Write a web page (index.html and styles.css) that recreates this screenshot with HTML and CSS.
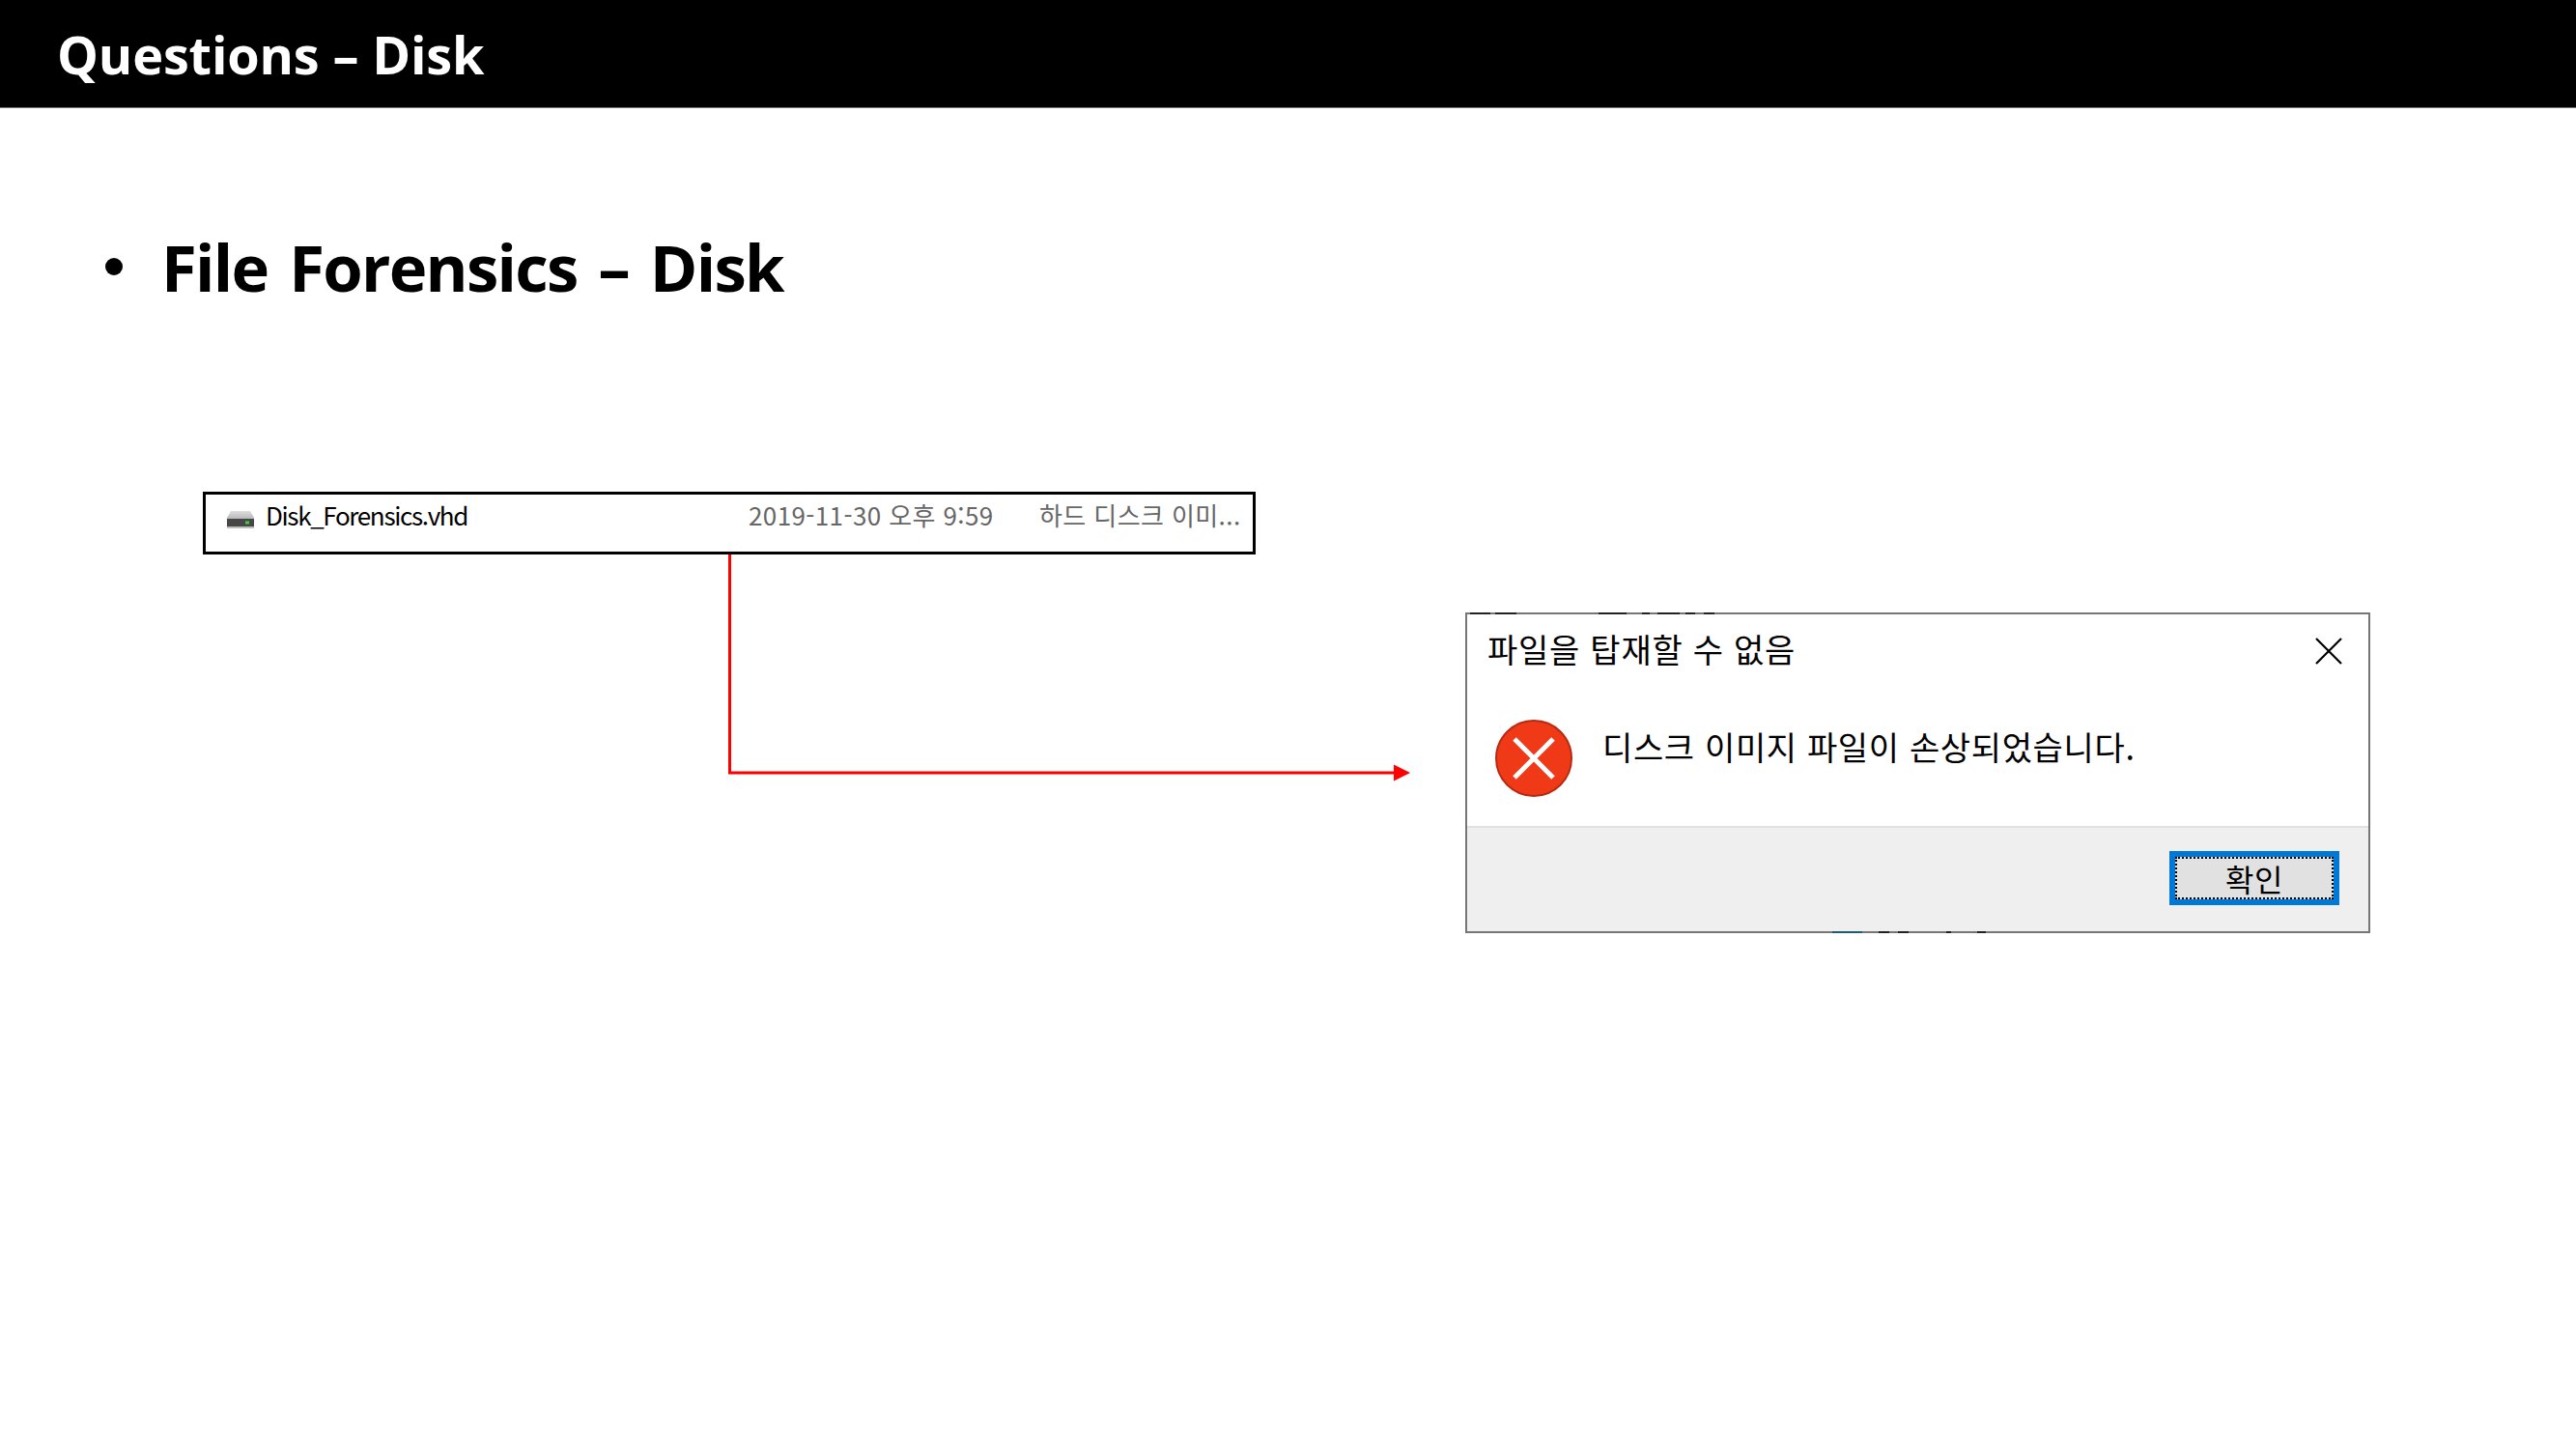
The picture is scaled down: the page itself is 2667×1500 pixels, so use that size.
FILE: index.html
```html
<!DOCTYPE html>
<html lang="ko">
<head>
<meta charset="utf-8">
<title>Questions – Disk</title>
<link rel="stylesheet" href="styles.css">
</head>
<body>
<header class="topbar"><h1 class="topbar-title">Questions – Disk</h1></header>
<main class="slide">
  <ul class="points"><li class="point"><span class="bullet"></span><span>File Forensics – Disk</span></li></ul>
  <section class="diagram">
    <div class="file-row">
      <svg class="drive" viewBox="0 0 28 18" aria-hidden="true">
        <defs><linearGradient id="dt" x1="0" y1="0" x2="0" y2="1"><stop offset="0" stop-color="#dedede"/><stop offset="1" stop-color="#b4b4b4"/></linearGradient></defs>
        <path d="M4 0h20l4 7v2H0V7z" fill="url(#dt)"/>
        <rect x="0" y="8" width="28" height="8" fill="#474747"/>
        <rect x="0" y="16" width="28" height="2" fill="#bdbdbd"/>
        <rect x="19" y="10.5" width="4" height="3" fill="#35d43a"/>
      </svg>
      <span class="file-name">Disk_Forensics.vhd</span>
      <span class="file-date">2019-11-30 오후 9:59</span>
      <span class="file-type">하드 디스크 이미...</span>
    </div>
    <div class="dialog">
      <div class="dialog-head">
        <span class="dialog-title">파일을 탑재할 수 없음</span>
        <svg class="close" viewBox="0 0 28 28" aria-hidden="true"><path d="M1 1l26 26M27 1L1 27" stroke="#000" stroke-width="2.2" fill="none"/></svg>
      </div>
      <div class="dialog-body">
        <svg class="err" viewBox="0 0 80 80" aria-hidden="true">
          <circle cx="40" cy="40" r="39" fill="#f03a17" stroke="#b72a12" stroke-width="2"/>
          <path d="M20 20l40 40M60 20L20 60" stroke="#fff" stroke-width="5" fill="none"/>
        </svg>
        <span class="dialog-msg">디스크 이미지 파일이 손상되었습니다.</span>
      </div>
      <div class="dialog-foot"><button class="ok" type="button"><span class="ok-focus">확인</span></button></div>
    </div>
    <svg class="connector" viewBox="0 0 720 240" aria-hidden="true">
      <path d="M1.5 0V226H690" fill="none" stroke="#f00" stroke-width="3"/>
      <path d="M689 217.5L706 226L689 234.5z" fill="#f00"/>
    </svg>
  </section>
</main>
</body>
</html>
```
FILE: styles.css
```css
* { box-sizing: border-box; }
html, body { margin: 0; padding: 0; background: #fff; }
body { width: 2667px; height: 1500px; overflow: hidden; font-family: "Noto Sans CJK KR", "Noto Sans", sans-serif; color: #000; }
.topbar { height: 112px; background: #000; border-bottom: 1px solid #777; display: flex; align-items: center; padding-left: 59px; }
.topbar-title { margin: 0; color: #fff; font-family: "Open Sans", "Noto Sans CJK KR", sans-serif; font-size: 54px; font-weight: 700; line-height: 1; letter-spacing: -0.15px; }
.slide { display: flex; flex-direction: column; }
.points { list-style: none; margin: 0; padding: 129px 0 0 109px; }
.point { display: flex; align-items: center; gap: 40px; height: 70px; font-family: "Open Sans", "Noto Sans CJK KR", sans-serif; font-size: 67px; font-weight: 700; line-height: 1; letter-spacing: -1.7px; word-spacing: 6px; }
.bullet { width: 18px; height: 18px; border-radius: 50%; background: #000; }
.diagram { position: relative; display: flex; align-items: flex-start; margin-top: 198px; padding-left: 210px; }
.file-row { position: relative; width: 1090px; height: 65px; border: 3px solid #000; display: flex; align-items: flex-start; font-size: 26px; line-height: 36px; padding: 3px 0 0 22px; letter-spacing: 0.4px; }
.drive { width: 28px; height: 18px; margin: 14px 12px 0 0; flex: none; }
.file-name { width: 500px; flex: none; letter-spacing: -1.35px; }
.file-date { width: 301px; flex: none; color: #666; }
.file-type { color: #666; white-space: nowrap; }
.dialog { position: relative; width: 937px; height: 332px; margin: 125px 0 0 217px; border: 2px solid #767676; background: #fff; display: flex; flex-direction: column; }
.dialog::before { content: ""; position: absolute; left: 3px; top: -2px; width: 260px; height: 2px; background: linear-gradient(90deg, #222 0 21px, transparent 21px 26px, #222 26px 48px, transparent 48px 133px, #222 133px 162px, transparent 162px 178px, #222 178px 186px, transparent 186px 194px, #222 194px 217px, transparent 217px 223px, #222 223px 233px, transparent 233px 242px, #222 242px 253px, transparent 253px); }
.dialog::after { content: ""; position: absolute; left: 378px; bottom: -2px; width: 160px; height: 2px; background: linear-gradient(90deg, #1d5d6b 0 31px, transparent 31px 48px, #222 48px 59px, transparent 59px 68px, #222 68px 79px, transparent 79px 118px, #222 118px 123px, transparent 123px 150px, #222 150px 159px, transparent 159px); }
.dialog-head { height: 76px; display: flex; align-items: center; justify-content: space-between; padding: 0 27px 0 21px; }
.dialog-title { font-size: 34px; line-height: 1; letter-spacing: 0.75px; margin-top: -4px; }
.close { width: 28px; height: 28px; }
.dialog-body { flex: 1; display: flex; align-items: flex-start; padding: 33px 0 0 29px; gap: 31px; }
.err { width: 80px; height: 80px; flex: none; }
.dialog-msg { font-size: 34px; line-height: 46px; margin-top: 5px; letter-spacing: 0.65px; }
.dialog-foot { height: 109px; background: #efefef; border-top: 2px solid #e0e0e0; display: flex; justify-content: flex-end; padding: 24px 30px 0 0; }
.ok { width: 176px; height: 56px; padding: 0; border: 6px solid #0078d7; background: #e1e1e1; font: inherit; display: flex; }
.ok-focus { flex: 1; border: 2px dotted #000; font-size: 32px; line-height: 36px; letter-spacing: 0.5px; color: #000; display: flex; align-items: center; justify-content: center; }
.connector { position: absolute; left: 754px; top: 65px; width: 720px; height: 240px; overflow: visible; }
```
